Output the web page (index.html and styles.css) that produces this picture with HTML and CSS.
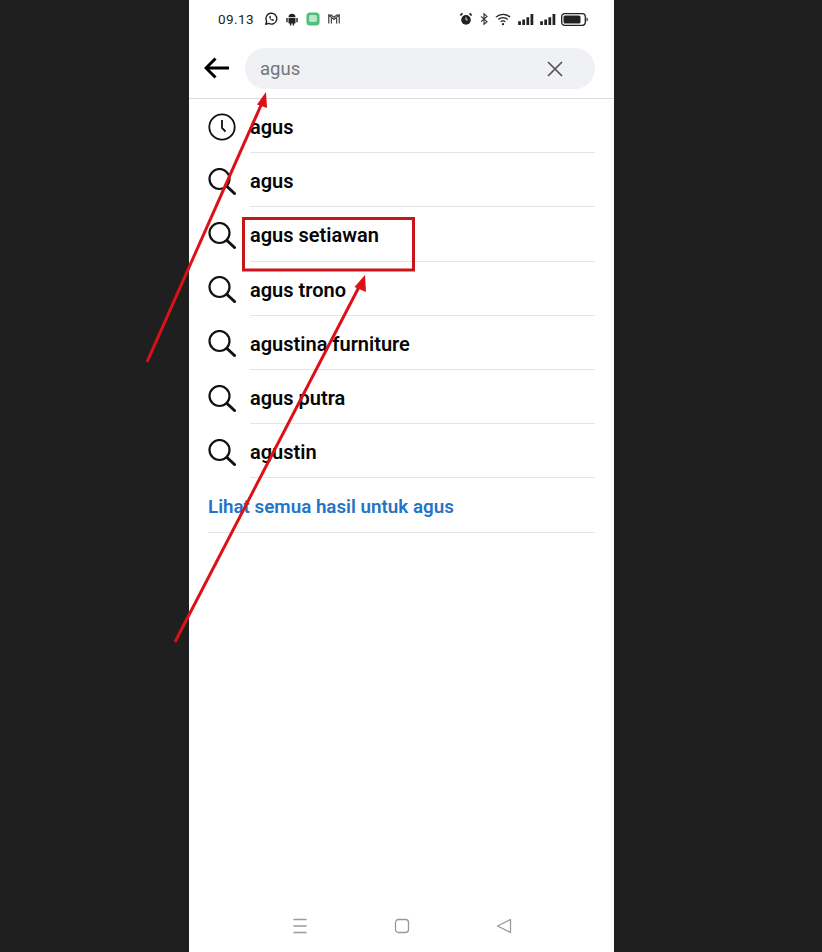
FILE: index.html
```html
<!DOCTYPE html>
<html lang="id">
<head>
<meta charset="utf-8">
<title>agus</title>
<link rel="stylesheet" href="styles.css">
</head>
<body>
<svg width="0" height="0" class="defs">
  <symbol id="search" viewBox="0 0 28 27"><circle cx="11.500" cy="11" r="10" fill="none" stroke="#111" stroke-width="2.200"/><path d="M19 18.500L26.500 25.500" fill="none" stroke="#111" stroke-width="3" stroke-linecap="round"/></symbol>
</svg>
<main class="phone">
  <div class="status">
    <div class="status-left">
      <span class="time">09.13</span>
      <svg class="si" viewBox="0 0 16 16"><path d="M2 14l1-3.400A6.200 6.200 0 1 1 5.400 13z" fill="none" stroke="#222" stroke-width="1.600" stroke-linejoin="round"/><path d="M5.800 5.200c.2 2.600 2.200 4.800 4.800 5.200l1-1.500-1.700-.9-.8.7c-.8-.4-1.300-1-1.700-1.800l.7-.8-.8-1.700z" fill="#222"/></svg>
      <svg class="si" viewBox="0 0 16 16"><path d="M4 6a4 4 0 0 1 8 0zM4 6.800h8v5.400a1 1 0 0 1-1 1h-.6V15.500H8.800v-2.300H7.200V15.500H5.600v-2.300H5a1 1 0 0 1-1-1zM1.500 6.800h1.600v4.800H1.500zM12.900 6.800h1.600v4.800h-1.600z" fill="#222"/></svg>
      <svg class="si" viewBox="0 0 16 16"><rect x=".5" y=".5" width="15" height="15" rx="4" fill="#4fc07a"/><rect x="3.500" y="3.500" width="9" height="8" rx="2" fill="#b9e8c8"/></svg>
      <svg class="si" viewBox="0 0 16 16"><path d="M2 13V3.500l6 5 6-5V13M2 3.500h3l3 2.500 3-2.500h3M5 13V7M11 13V7" fill="none" stroke="#444" stroke-width="1.400"/></svg>
    </div>
    <div class="status-right">
      <svg class="si" viewBox="0 0 16 16"><circle cx="8" cy="9" r="5.500" fill="#222"/><path d="M1.500 4L4 1.500M14.500 4L12 1.500" stroke="#222" stroke-width="2"/><path d="M8 6v3h2" stroke="#fff" fill="none"/></svg>
      <svg class="si bt" viewBox="0 0 16 16"><path d="M4 4.500l8 7-4 3.500V1l4 3.500-8 7" fill="none" stroke="#333" stroke-width="1.500"/></svg>
      <svg class="wifi" viewBox="0 0 18 14"><path d="M1 5a11 11 0 0 1 15 0M3.500 7.500a7.500 7.500 0 0 1 10 0M6 10a4 4 0 0 1 5 0" fill="none" stroke="#222" stroke-width="1.400"/><circle cx="8.500" cy="12.500" r="1.200" fill="#222"/></svg>
      <svg class="sig" viewBox="0 0 18 12"><path d="M1 8h3v4H1zM5.500 6h3v6h-3zM10 3.500h3V12h-3zM14.500 0h3v12h-3z" fill="#222"/></svg>
      <svg class="sig" viewBox="0 0 18 12"><path d="M1 8h3v4H1zM5.500 6h3v6h-3zM10 3.500h3V12h-3zM14.500 0h3v12h-3z" fill="#222"/></svg>
      <svg class="batt" viewBox="0 0 27 13"><rect x=".7" y=".7" width="23.600" height="11.600" rx="3" fill="none" stroke="#222" stroke-width="1.300"/><rect x="2.500" y="2.500" width="17" height="8" rx="1.500" fill="#222"/><path d="M25.500 4.500c1 .3 1.300 1 1.300 2s-.3 1.700-1.300 2z" fill="#222"/></svg>
    </div>
  </div>
  <header class="searchbar">
    <svg class="back" viewBox="0 0 26 22"><path d="M25 11H2.500M11.500 1.500L2 11l9.500 9.500" fill="none" stroke="#000" stroke-width="3"/></svg>
    <div class="field">
      <span class="query">agus</span>
      <svg class="clear" viewBox="0 0 16 16"><path d="M1 1l14 14M15 1L1 15" stroke="#555" stroke-width="1.700"/></svg>
    </div>
  </header>
  <ul class="results">
    <li class="row">
      <svg class="ic clock" viewBox="0 0 28 28"><circle cx="14" cy="14" r="12.700" fill="none" stroke="#111" stroke-width="1.800"/><path d="M14 7v8l3.500 3.500" fill="none" stroke="#111" stroke-width="1.800"/></svg>
      <span class="label">agus</span>
    </li>
    <li class="row"><svg class="ic"><use href="#search"/></svg><span class="label">agus</span></li>
    <li class="row"><svg class="ic"><use href="#search"/></svg><span class="label">agus setiawan</span></li>
    <li class="row"><svg class="ic"><use href="#search"/></svg><span class="label">agus trono</span></li>
    <li class="row"><svg class="ic"><use href="#search"/></svg><span class="label">agustina furniture</span></li>
    <li class="row"><svg class="ic"><use href="#search"/></svg><span class="label">agus putra</span></li>
    <li class="row"><svg class="ic"><use href="#search"/></svg><span class="label">agustin</span></li>
    <li class="row all"><span class="label">Lihat semua hasil untuk agus</span></li>
  </ul>
  <nav class="navbar">
    <svg class="nav" viewBox="0 0 16 16"><path d="M1.500 1.500h13M1.500 8h13M1.500 14.500h13" stroke="#999" stroke-width="1.300"/></svg>
    <svg class="nav" viewBox="0 0 16 16"><rect x="1.500" y="1.500" width="13" height="13" rx="3" fill="none" stroke="#999" stroke-width="1.300"/></svg>
    <svg class="nav" viewBox="0 0 16 16"><path d="M1.500 8L14.500 1.500V14.500z" fill="none" stroke="#999" stroke-width="1.300" stroke-linejoin="round"/></svg>
  </nav>
</main>
<svg class="annot" viewBox="0 0 822 952">
  <rect x="243.500" y="218.500" width="170" height="51.500" fill="none" stroke="#c8141b" stroke-width="3"/>
  <path d="M147 362L262 103" stroke="#dd1018" stroke-width="3"/>
  <path d="M266 92L257 104.500L267 108z" fill="#dd1018"/>
  <path d="M175 642L360 285" stroke="#dd1018" stroke-width="3"/>
  <path d="M365 275L354.500 287L366 292z" fill="#dd1018"/>
</svg>
</body>
</html>
```

FILE: styles.css
```css
* { box-sizing: border-box; }
html, body { margin: 0; height: 952px; overflow: hidden; }
body {
  position: relative;
  padding-left: 189px;
  background: #1f1f1f;
  font-family: Roboto, "Liberation Sans", sans-serif;
}
.defs { position: absolute; }
.phone {
  width: 425px;
  height: 952px;
  background: #fff;
  display: flex;
  flex-direction: column;
}
.status {
  height: 38px;
  flex: none;
  display: flex;
  align-items: center;
  justify-content: space-between;
  padding: 0 26px 0 29px;
}
.status-left, .status-right { display: flex; align-items: center; }
.status-left { gap: 7px; }
.status-right { gap: 5px; }
.time { font-size: 13.500px; color: #222; letter-spacing: .4px; margin-right: 3px; }
.si { width: 14px; height: 14px; display: block; }
.bt { width: 12px; }
.wifi { width: 17px; height: 14px; display: block; }
.sig { width: 17px; height: 11px; display: block; }
.batt { width: 27px; height: 13px; display: block; }
.searchbar {
  height: 61px;
  flex: none;
  display: flex;
  align-items: flex-start;
  border-bottom: 1.500px solid #dcdcdc;
  padding: 10px 19px 0 15px;
}
.back { width: 26px; height: 22px; margin: 9px 15px 0 0; flex: none; }
.field {
  flex: 1;
  height: 41px;
  border-radius: 21px;
  background: #f0f1f5;
  display: flex;
  align-items: center;
  justify-content: space-between;
  padding: 0 32px 0 15px;
}
.query { font-size: 18.500px; color: #73767c; }
.clear { width: 16px; height: 16px; display: block; }
.results {
  list-style: none;
  margin: 0;
  padding: 0 19px;
  display: flex;
  flex-direction: column;
}
.row {
  height: 54.200px;
  display: flex;
  align-items: center;
  font-size: 20px;
  font-weight: 600;
  color: #050505;
  position: relative;
}
.row::after {
  content: "";
  position: absolute;
  left: 42px;
  right: 0;
  bottom: 0;
  border-bottom: 1px solid #e4e4e6;
}
.label { position: relative; top: 1px; }
.ic { width: 28px; height: 27px; flex: none; margin-right: 14px; display: block; position: relative; top: 1px; }
.clock { height: 28px; }
.all { color: #2374c8; font-size: 18.800px; }
.all .label { top: 2px; }
.all::after { left: 0; }
.navbar {
  margin-top: auto;
  height: 52px;
  flex: none;
  display: flex;
  justify-content: center;
  gap: 86px;
  padding-top: 18px;
}
.nav { width: 16px; height: 16px; display: block; }
.annot {
  position: absolute;
  left: 0;
  top: 0;
  width: 822px;
  height: 952px;
  pointer-events: none;
}
```
